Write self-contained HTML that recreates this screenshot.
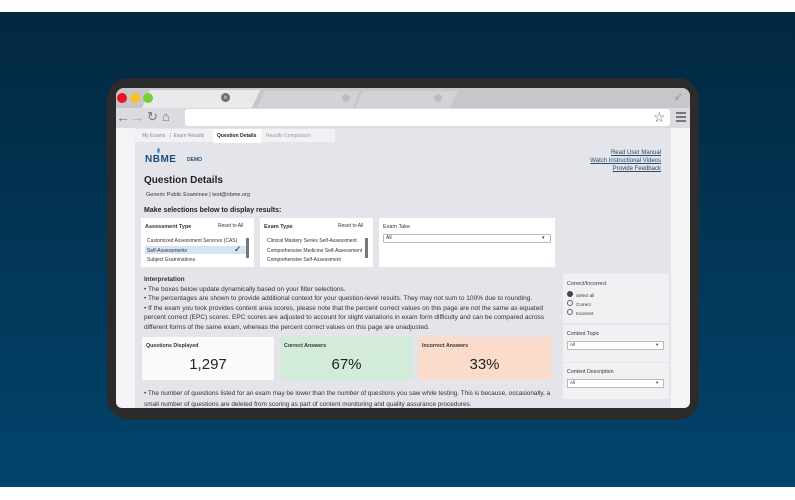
<!DOCTYPE html>
<html><head><meta charset="utf-8"><style>
*{margin:0;padding:0;box-sizing:border-box}
body{width:795px;height:500px;overflow:hidden;font-family:"Liberation Sans",sans-serif;background:#fff;position:relative;color:#222}
.a{position:absolute}
.bg{left:0;top:12px;width:795px;height:475px;background:linear-gradient(#022840,#02446d)}
.frame{left:107px;top:78px;width:592px;height:342px;background:#2b2b2b;border-radius:22px}
.browser{left:116px;top:88px;width:574px;height:320px;background:#f4f4f6;border-radius:8px 8px 6px 6px;overflow:hidden}
.t{font-size:6.3px;white-space:nowrap;color:#333}
.box{background:#fff}
</style></head><body>
<div class="a bg"></div>
<div class="a frame"></div>
<div class="a browser">
  <div class="a" style="left:0;top:0;width:574px;height:20px;background:#c6c6cb"></div>
  <div class="a" style="left:30px;top:2px;width:110px;height:18px;background:#e9e9ec;transform:skewX(-25deg)"></div>
  <div class="a" style="left:145px;top:3px;width:95px;height:17px;background:#d3d3d7;transform:skewX(-25deg)"></div>
  <div class="a" style="left:243px;top:3px;width:95px;height:17px;background:#d3d3d7;transform:skewX(-25deg)"></div>
  <div class="a" style="left:105px;top:5px;width:9px;height:9px;border-radius:50%;background:#6e6e72;color:#ddd;font-size:8px;line-height:9px;text-align:center">×</div>
  <div class="a" style="left:226px;top:6px;width:8px;height:8px;border-radius:50%;background:#bdbdc1"></div>
  <div class="a" style="left:318px;top:6px;width:8px;height:8px;border-radius:50%;background:#bdbdc1"></div>
  <div class="a" style="left:1px;top:5px;width:10px;height:10px;border-radius:50%;background:#f01020"></div>
  <div class="a" style="left:14px;top:5px;width:10px;height:10px;border-radius:50%;background:#f8c020"></div>
  <div class="a" style="left:27px;top:5px;width:10px;height:10px;border-radius:50%;background:#7ad030"></div>
  <div class="a" style="left:558px;top:2px;font-size:11px;color:#999">↙</div>
  <div class="a" style="left:0;top:20px;width:574px;height:20px;background:#dcdce0"></div>
  <div class="a" style="left:0;top:21px;font-size:14px;color:#777;line-height:16px">←</div>
  <div class="a" style="left:14px;top:21px;font-size:14px;color:#aaa;line-height:16px">→</div>
  <div class="a" style="left:31px;top:21px;font-size:13px;color:#777;line-height:16px">↻</div>
  <div class="a" style="left:46px;top:21px;font-size:13px;color:#777;line-height:16px">⌂</div>
  <div class="a" style="left:69px;top:21px;width:485px;height:17px;background:#fff;border-radius:3px"></div>
  <div class="a" style="left:537px;top:21px;font-size:14px;color:#666;line-height:16px">☆</div>
  <div class="a" style="left:560px;top:24px;width:10px;height:2px;background:#777;box-shadow:0 4px #777,0 8px #777"></div>
  <div class="a" style="left:19px;top:40px;width:536px;height:280px;background:#e3e5ea"></div>
  <div class="a" style="left:19px;top:41px;width:200px;height:13px;background:#f1f2f4"></div>
  <div class="a" style="left:97px;top:41px;width:48px;height:14px;background:#fff"></div>
  <div class="a t" style="left:26px;top:45px;font-size:5px;color:#888">My Exams &nbsp;&nbsp;|&nbsp; Exam Results</div>
  <div class="a t" style="left:101px;top:45px;font-size:5px;font-weight:bold;color:#222">Question Details</div>
  <div class="a t" style="left:150px;top:45px;font-size:5px;color:#999">Results Comparison</div>
  <div class="a" style="left:29px;top:66px;font-size:10px;font-weight:bold;color:#1d4f80;letter-spacing:0.5px">NBME</div>
  <div class="a" style="left:41px;top:60px;width:3px;height:5px;background:#3b9be0;border-radius:50%"></div>
  <div class="a" style="left:71px;top:69px;font-size:5px;font-weight:bold;color:#2d4a80">DEMO</div>
  <div class="a" style="right:29px;top:61px;text-align:right;line-height:8px;font-size:6px;color:#2d4a6a;text-decoration:underline">Read User Manual<br>Watch Instructional Videos<br>Provide Feedback</div>
  <div class="a" style="left:28px;top:87px;font-size:10px;font-weight:bold;color:#222">Question Details</div>
  <div class="a t" style="left:30px;top:104px;font-size:5.5px">Generic Public Examinee | test@nbme.org</div>
  <div class="a" style="left:28px;top:119px;font-size:7px;font-weight:bold;color:#222">Make selections below to display results:</div>
  <div class="a box" style="left:25px;top:130px;width:113px;height:49px"></div>
  <div class="a t" style="left:29px;top:136px;font-size:5.5px;font-weight:bold">Assessment Type</div>
  <div class="a t" style="left:102px;top:135px;font-size:5px">Reset to All</div>
  <div class="a" style="left:29px;top:158px;width:101px;height:8px;background:#d6e4f2"></div>
  <div class="a t" style="left:31px;top:149px;font-size:5px;line-height:9.5px">Customized Assessment Services (CAS)<br>Self-Assessments<br>Subject Examinations</div>
  <div class="a" style="left:118px;top:156px;font-size:9px">✓</div>
  <div class="a" style="left:130px;top:150px;width:3px;height:20px;background:#777"></div>
  <div class="a box" style="left:144px;top:130px;width:113px;height:49px"></div>
  <div class="a t" style="left:148px;top:136px;font-size:5.5px;font-weight:bold">Exam Type</div>
  <div class="a t" style="left:222px;top:135px;font-size:5px">Reset to All</div>
  <div class="a t" style="left:151px;top:149px;font-size:5px;line-height:9.5px">Clinical Mastery Series Self-Assessment<br>Comprehensive Medicine Self-Assessment<br>Comprehensive Self-Assessment</div>
  <div class="a" style="left:249px;top:150px;width:3px;height:20px;background:#777"></div>
  <div class="a box" style="left:263px;top:130px;width:176px;height:49px"></div>
  <div class="a t" style="left:267px;top:136px;font-size:5.5px">Exam Take</div>
  <div class="a" style="left:267px;top:146px;width:168px;height:9px;border:1px solid #bbb;border-radius:1px;background:#fff"></div>
  <div class="a t" style="left:270px;top:147px;font-size:5px">All</div>
  <div class="a t" style="left:426px;top:147px;font-size:5px">▾</div>
  <div class="a" style="left:28px;top:188px;font-size:6.3px;font-weight:bold;color:#333">Interpretation</div>
  <div class="a t" style="left:28px;top:197px;line-height:9.4px;font-size:6.55px">• The boxes below update dynamically based on your filter selections.<br>• The percentages are shown to provide additional context for your question-level results. They may not sum to 100% due to rounding.<br>• If the exam you took provides content area scores, please note that the percent correct values on this page are not the same as equated<br>percent correct (EPC) scores. EPC scores are adjusted to account for slight variations in exam form difficulty and can be compared across<br>different forms of the same exam, whereas the percent correct values on this page are unadjusted.</div>
  <div class="a" style="left:26px;top:249px;width:132px;height:43px;background:#fafafb"></div>
  <div class="a" style="left:164px;top:249px;width:133px;height:43px;background:#d3ebd9"></div>
  <div class="a" style="left:302px;top:249px;width:133px;height:43px;background:#fbdccb"></div>
  <div class="a t" style="left:30px;top:255px;font-size:5.3px;font-weight:bold">Questions Displayed</div>
  <div class="a t" style="left:168px;top:255px;font-size:5.3px;font-weight:bold">Correct Answers</div>
  <div class="a t" style="left:306px;top:255px;font-size:5.3px;font-weight:bold">Incorrect Answers</div>
  <div class="a" style="left:26px;top:268px;width:132px;text-align:center;font-size:15px;color:#222">1,297</div>
  <div class="a" style="left:164px;top:268px;width:133px;text-align:center;font-size:15px;color:#222">67%</div>
  <div class="a" style="left:302px;top:268px;width:133px;text-align:center;font-size:15px;color:#222">33%</div>
  <div class="a t" style="left:28px;top:301px;line-height:10.5px;font-size:6.4px">• The number of questions listed for an exam may be lower than the number of questions you saw while testing. This is because, occasionally, a<br>small number of questions are deleted from scoring as part of content monitoring and quality assurance procedures.</div>
  <div class="a" style="left:447px;top:186px;width:106px;height:49px;background:#f0f1f3"></div>
  <div class="a" style="left:447px;top:237px;width:106px;height:37px;background:#f0f1f3"></div>
  <div class="a" style="left:447px;top:275px;width:106px;height:36px;background:#f0f1f3"></div>
  <div class="a t" style="left:451px;top:193px;font-size:5.3px">Correct/Incorrect</div>
  <div class="a" style="left:451px;top:203px;width:6px;height:6px;border-radius:50%;background:#444"></div>
  <div class="a" style="left:451px;top:212px;width:6px;height:6px;border-radius:50%;border:0.7px solid #666"></div>
  <div class="a" style="left:451px;top:221px;width:6px;height:6px;border-radius:50%;border:0.7px solid #666"></div>
  <div class="a t" style="left:460px;top:203px;font-size:4.5px;line-height:9px">Select all<br>Correct<br>Incorrect</div>
  <div class="a t" style="left:451px;top:243px;font-size:5.3px">Content Topic</div>
  <div class="a" style="left:451px;top:253px;width:97px;height:9px;border:1px solid #bbb;background:#fff"></div>
  <div class="a t" style="left:454px;top:254px;font-size:4.5px">All</div>
  <div class="a t" style="left:540px;top:254px;font-size:4.5px">▾</div>
  <div class="a t" style="left:451px;top:281px;font-size:5.3px">Content Description</div>
  <div class="a" style="left:451px;top:291px;width:97px;height:9px;border:1px solid #bbb;background:#fff"></div>
  <div class="a t" style="left:454px;top:292px;font-size:4.5px">All</div>
  <div class="a t" style="left:540px;top:292px;font-size:4.5px">▾</div>
</div>
</body></html>
